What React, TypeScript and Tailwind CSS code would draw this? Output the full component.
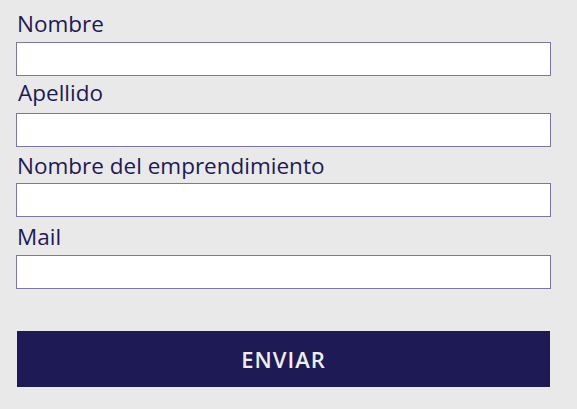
import { useState } from "react";

type FieldProps = {
    label: string;
    wrapClass: string;
    labelClass: string;
    type?: string;
};

function Field({ label, wrapClass, labelClass, type = "text" }: FieldProps) {
    const [ value, setValue ] = useState("");

    return (
        <div className={`flex flex-col ${wrapClass}`}>
            <label className={`h-[28px] leading-[28px] text-[22.5px] text-[#1e1a55] whitespace-nowrap ${labelClass}`}>
                {label}
            </label>
            <input
                type={type}
                value={value}
                onChange={(e) => setValue(e.target.value)}
                className="h-[34px] w-[535px] bg-white border border-[#7b76a6] outline-none px-2 text-[16px] text-[#1e1a55]"
            />
        </div>
    );
}

export default function App() {
    return (
        <div className="w-[577px] h-[409px] bg-[#e9e9e9] pl-[16px] pt-[10px]" style={{ fontFamily: "'Open Sans', Lato, sans-serif" }}>
            <form className="flex flex-col" onSubmit={(e) => e.preventDefault()}>
                <Field label="Nombre" wrapClass="" labelClass="pl-[1px] mb-[4px]" />
                <Field label="Apellido" wrapClass="mt-[3px]" labelClass="pl-[2px] mb-[6px]" />
                <Field label="Nombre del emprendimiento" wrapClass="mt-[5px]" labelClass="pl-[1px] mb-[3px]" />
                <Field label="Mail" type="email" wrapClass="mt-[6px]" labelClass="pl-[1px] mb-[4px]" />

                <button
                    type="submit"
                    className="mt-[42px] ml-[1px] h-[56px] w-[533px] bg-[#1e1a55] text-[#eeeeee] text-[22px] font-semibold tracking-[1px] cursor-pointer"
                >
                    ENVIAR
                </button>
            </form>
        </div>
    );
}
